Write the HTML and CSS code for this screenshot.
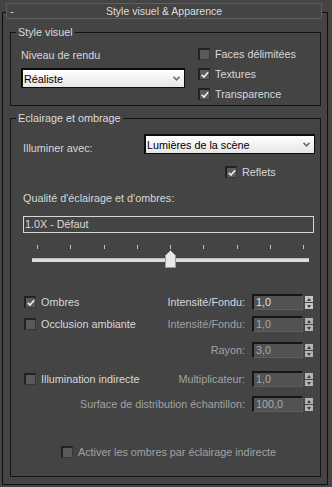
FILE: index.html
```html
<!DOCTYPE html>
<html lang="fr">
<head>
<meta charset="utf-8">
<title>Style visuel &amp; Apparence</title>
<link rel="stylesheet" href="styles.css">
</head>
<body>
<div class="rollout">
  <div class="rollout-head">
    <span class="toggle">-</span>
    <span class="title">Style visuel &amp; Apparence</span>
    <span></span>
  </div>

  <fieldset class="group g1">
    <legend>Style visuel</legend>
    <div class="g1-body">
      <div class="g1-left">
        <div class="lbl">Niveau de rendu</div>
        <div class="combo combo1">
          <span>Réaliste</span>
          <svg class="arrow" width="7" height="5" viewBox="0 0 7 5"><polyline points="0.5,0.8 3.5,3.8 6.5,0.8" fill="none" stroke="#6e6e6e" stroke-width="1.6"/></svg>
        </div>
      </div>
      <div class="g1-right">
        <div class="chk"><span class="box"></span><span>Faces délimitées</span></div>
        <div class="chk"><span class="box"><svg width="8" height="8" viewBox="0 0 8 8"><polyline points="0.8,3.8 3,6 7.2,1.3" fill="none" stroke="#ececec" stroke-width="1.7"/></svg></span><span>Textures</span></div>
        <div class="chk"><span class="box"><svg width="8" height="8" viewBox="0 0 8 8"><polyline points="0.8,3.8 3,6 7.2,1.3" fill="none" stroke="#ececec" stroke-width="1.7"/></svg></span><span>Transparence</span></div>
      </div>
    </div>
  </fieldset>

  <fieldset class="group g2">
    <legend>Eclairage et ombrage</legend>
    <div class="g2-body">
      <div class="illum-row">
        <div class="illum-lbl">Illuminer avec:</div>
        <div class="combo combo2">
          <span>Lumières de la scène</span>
          <svg class="arrow" width="7" height="5" viewBox="0 0 7 5"><polyline points="0.5,0.8 3.5,3.8 6.5,0.8" fill="none" stroke="#6e6e6e" stroke-width="1.6"/></svg>
        </div>
      </div>

      <div class="reflets-row">
        <div class="chk"><span class="box"><svg width="8" height="8" viewBox="0 0 8 8"><polyline points="0.8,3.8 3,6 7.2,1.3" fill="none" stroke="#ececec" stroke-width="1.7"/></svg></span><span>Reflets</span></div>
      </div>

      <div class="q-label">Qualité d'éclairage et d'ombres:</div>
      <div class="q-field">1.0X - Défaut</div>

      <div class="slider">
        <div class="ticks">
          <i></i><i></i><i></i><i></i><i></i><i></i><i></i><i></i><i></i>
        </div>
        <div class="track"></div>
        <svg class="thumb" width="11" height="18" viewBox="0 0 11 18"><polygon points="0.5,17.5 0.5,5.5 5.5,0.5 10.5,5.5 10.5,17.5" fill="#e8e8e8" stroke="#9a9a9a" stroke-width="1"/></svg>
      </div>

      <div class="srow r1">
        <div class="chk left"><span class="box"><svg width="8" height="8" viewBox="0 0 8 8"><polyline points="0.8,3.8 3,6 7.2,1.3" fill="none" stroke="#ececec" stroke-width="1.7"/></svg></span><span>Ombres</span></div>
        <div class="spin-wrap">
          <span class="slbl">Intensité/Fondu:</span>
          <span class="sinput">1,0</span>
          <span class="sbtns"><b class="up"></b><b class="dn"></b></span>
        </div>
      </div>

      <div class="srow r2">
        <div class="chk left"><span class="box"></span><span>Occlusion ambiante</span></div>
        <div class="spin-wrap dis">
          <span class="slbl">Intensité/Fondu:</span>
          <span class="sinput">1,0</span>
          <span class="sbtns"><b class="up"></b><b class="dn"></b></span>
        </div>
      </div>

      <div class="srow r3">
        <div class="spin-wrap dis">
          <span class="slbl">Rayon:</span>
          <span class="sinput">3,0</span>
          <span class="sbtns"><b class="up"></b><b class="dn"></b></span>
        </div>
      </div>

      <div class="srow r4">
        <div class="chk left"><span class="box"></span><span>Illumination indirecte</span></div>
        <div class="spin-wrap dis">
          <span class="slbl">Multiplicateur:</span>
          <span class="sinput">1,0</span>
          <span class="sbtns"><b class="up"></b><b class="dn"></b></span>
        </div>
      </div>

      <div class="srow r5">
        <div class="spin-wrap dis">
          <span class="slbl">Surface de distribution échantillon:</span>
          <span class="sinput">100,0</span>
          <span class="sbtns"><b class="up"></b><b class="dn"></b></span>
        </div>
      </div>

      <div class="activer-row">
        <div class="chk dis"><span class="box"></span><span>Activer les ombres par éclairage indirecte</span></div>
      </div>
    </div>
  </fieldset>
</div>
</body>
</html>
```

FILE: styles.css
```css
html, body {
  margin: 0;
  padding: 0;
  background: #444444;
}

body {
  font-family: "Liberation Sans", Arial, sans-serif;
  font-size: 10.8px;
  color: #d8d8d8;
  overflow: hidden;
}

.rollout {
  margin: 12px 4px 0 2px;
  border: 1px solid #0f0f0f;
  height: 473px;
  box-sizing: border-box;
}

.rollout-head {
  margin: -10px 5px 0 3px;
  height: 16px;
  box-sizing: border-box;
  border: 1px solid #5e5e5e;
  background: #444444;
  display: grid;
  grid-template-columns: 1fr auto 1fr;
  align-items: center;
  line-height: 14px;
  color: #dedede;
}

.title {
  font-size: 10.5px;
}

.toggle {
  padding-left: 3px;
}

/* group boxes */
.group {
  margin: 0;
  padding: 0;
  border: 1px solid #141414;
  min-width: 0;
}

.group legend {
  margin-left: 5px;
  padding: 0 2px;
  line-height: 13px;
  height: 13px;
  color: #dcdcdc;
}

.g1 {
  margin: 7px 6px 0 7px;
}

.g2 {
  margin: 6px 6px 0 7px;
}

.g1-body {
  height: 66px;
  box-sizing: border-box;
  padding: 9px 0 0 10px;
  display: flex;
}

.g1-left {
  width: 164px;
}

.lbl {
  line-height: 14px;
  height: 14px;
}

.combo {
  height: 20px;
  box-sizing: border-box;
  border: 1px solid #0c0c0c;
  border-top-width: 2px;
  border-left-width: 2px;
  background: linear-gradient(#ffffff, #e6e6e6);
  color: #000;
  display: flex;
  align-items: center;
  justify-content: space-between;
  padding: 0 4px 0 1px;
  line-height: 14px;
}

.combo1 {
  margin-top: 6px;
}

.g1-right {
  margin-left: 13px;
  display: flex;
  flex-direction: column;
  gap: 8px;
}

/* checkbox */
.chk {
  display: flex;
  align-items: center;
  height: 12px;
  line-height: 12px;
  gap: 5px;
  white-space: nowrap;
}

.box {
  width: 12px;
  height: 12px;
  box-sizing: border-box;
  border-style: solid;
  border-width: 2px 1px 1px 2px;
  border-color: #222222 #383838 #383838 #222222;
  background: #5a5a5a;
  display: flex;
  align-items: center;
  justify-content: center;
  flex: none;
}

.box svg {
  display: block;
}

.dis {
  color: #a2a2a2;
}

/* group 2 */
.g2-body {
  height: 351px;
  box-sizing: border-box;
  padding-top: 9px;
}

.illum-row {
  display: flex;
  margin-left: 12px;
  height: 20px;
}

.illum-lbl {
  width: 121px;
  margin-top: 7px;
  line-height: 14px;
  height: 14px;
}

.combo2 {
  width: 171px;
  padding-left: 1px;
}

.reflets-row {
  margin-top: 12px;
  padding-left: 214px;
}

.q-label {
  margin: 13px 0 0 12px;
  line-height: 14px;
  height: 14px;
}

.q-field {
  margin: 11px 0 0 12px;
  width: 291px;
  height: 17px;
  box-sizing: border-box;
  border: 1px solid #d6d6d6;
  padding-left: 1px;
  line-height: 15px;
  color: #dadada;
}

.slider {
  position: relative;
  margin-top: 12px;
  height: 24px;
}

.ticks {
  margin-left: 26px;
  width: 267px;
  height: 4px;
  display: flex;
  justify-content: space-between;
}

.ticks i {
  display: block;
  width: 1px;
  height: 4px;
  background: #c4c4c4;
}

.track {
  margin: 9px 0 0 21px;
  width: 277px;
  height: 4px;
  background: #dcdcdc;
  border-top: 1px solid #bdbdbd;
  box-sizing: border-box;
}

.thumb {
  position: absolute;
  left: 154px;
  top: 5px;
  display: block;
}

/* spinner rows */
.srow {
  display: flex;
  align-items: center;
  height: 16px;
}

.srow .left {
  margin-left: 13px;
}

.r1 { margin-top: 25px; }
.r2 { margin-top: 6px; }
.r3 { margin-top: 10px; }
.r4 { margin-top: 13px; }
.r5 { margin-top: 9px; }

.spin-wrap {
  margin-left: auto;
  margin-right: 7px;
  display: flex;
  align-items: center;
  height: 16px;
}

.slbl {
  margin-right: 7px;
  white-space: nowrap;
}

.sinput {
  width: 51px;
  height: 16px;
  box-sizing: border-box;
  border-style: solid;
  border-width: 2px 1px 1px 2px;
  border-color: #161616 #5e5e5e #5e5e5e #161616;
  background: #525252;
  padding-left: 2px;
  line-height: 13px;
  color: #e0e0e0;
}

.dis .sinput {
  color: #a8a8a8;
}

.sbtns {
  margin-left: 2px;
  width: 8px;
  height: 16px;
  box-sizing: border-box;
  padding-top: 2px;
  display: flex;
  flex-direction: column;
  gap: 1px;
}

.sbtns b {
  display: block;
  height: 6px;
  background: #c6c6c6;
  position: relative;
}

.dis .sbtns b {
  background: #b4b4b4;
}

.sbtns b::after {
  content: "";
  position: absolute;
  left: 1.5px;
  width: 0;
  height: 0;
  border-left: 2.5px solid transparent;
  border-right: 2.5px solid transparent;
}

.sbtns .up::after {
  top: 1.5px;
  border-bottom: 3px solid #3c3c3c;
}

.sbtns .dn::after {
  top: 1.5px;
  border-top: 3px solid #3c3c3c;
}

.activer-row {
  margin-top: 34px;
  padding-left: 50px;
}
```
